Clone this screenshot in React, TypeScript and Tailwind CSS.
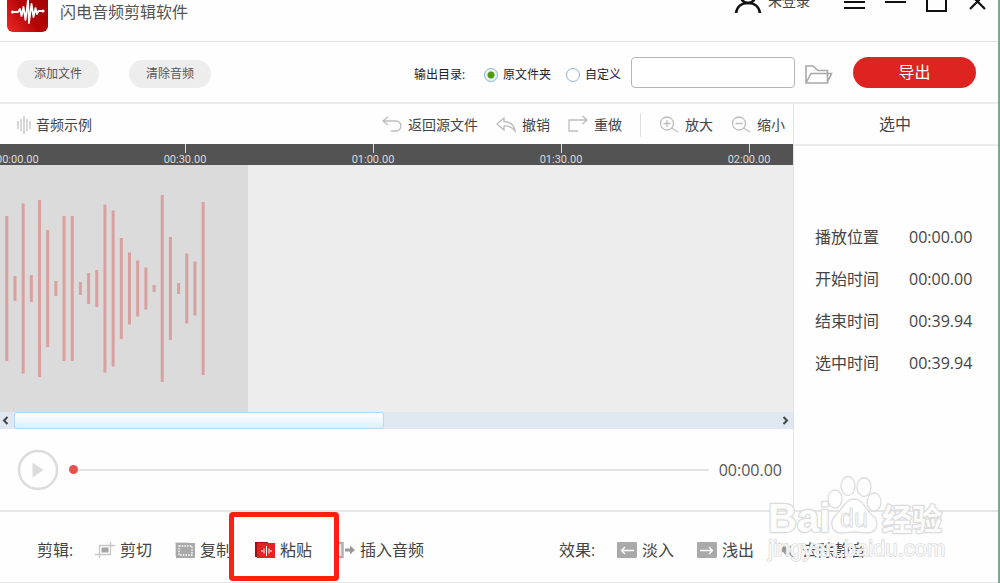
import { useState, type ReactNode } from "react";

const barHeights = [
  145, 25, 170, 27, 177, 117, 15, 145, 145, 13, 31, 37, 168, 156, 101, 72, 56, 42, 7, 187, 103, 11, 70, 54, 173,
];

const rulerMarks = ["00:30.00", "01:00.00", "01:30.00", "02:00.00"];

const selection = [
  { label: "播放位置", value: "00:00.00" },
  { label: "开始时间", value: "00:00.00" },
  { label: "结束时间", value: "00:39.94" },
  { label: "选中时间", value: "00:39.94" },
];

function LogoIcon() {
  return (
    <svg className="h-[41px] w-[41px] shrink-0" viewBox="0 0 41 41" aria-hidden="true">
      <defs>
        <linearGradient id="logo" x1="0" y1="1" x2="1" y2="0.3">
          <stop offset="0" stopColor="#ee2a28" />
          <stop offset="0.55" stopColor="#b40406" />
          <stop offset="1" stopColor="#a30204" />
        </linearGradient>
      </defs>
      <rect width="41" height="41" rx="6" fill="url(#logo)" />
      <path
        d="M5 21h6l2-3 1.500 7 2-9 2 13L21 9l1 23 2.500-19 2 13 2-9 1.500 6 1.500-3h5"
        fill="none"
        stroke="#fff"
        strokeWidth="1.800"
        strokeLinejoin="round"
      />
      <circle cx="5.500" cy="21" r="1.600" fill="#fff" />
      <circle cx="36" cy="20" r="1.600" fill="#fff" />
    </svg>
  );
}

function Icon({ children }: { children: ReactNode }) {
  return (
    <svg
      className="h-5 w-5 shrink-0"
      viewBox="0 0 20 20"
      fill="none"
      stroke="#bdbdbd"
      strokeWidth="1.300"
      aria-hidden="true"
    >
      {children}
    </svg>
  );
}

function ToolButton({ icon, label }: { icon: ReactNode; label: string }) {
  return (
    <button type="button" className="flex items-center gap-[6px] whitespace-nowrap text-sm text-[#444]">
      {icon}
      {label}
    </button>
  );
}

function EditButton({ icon, label, marked }: { icon: ReactNode; label: string; marked?: boolean }) {
  return (
    <button type="button" className="relative flex items-center gap-[5px] whitespace-nowrap text-base text-[#444]">
      {icon}
      {label}
      {marked && (
        <span className="pointer-events-none absolute -top-[26px] -left-[26px] z-10 h-[69px] w-[110px] rounded border-[5px] border-[#ff1f12]" />
      )}
    </button>
  );
}

function Header() {
  return (
    <header className="flex h-[42px] shrink-0 items-end justify-between overflow-hidden border-b border-[#e2e2e2] pr-[10px] pl-[7px]">
      <div className="mb-[9px] flex items-center gap-3">
        <LogoIcon />
        <h1 className="text-base text-[#555]">闪电音频剪辑软件</h1>
      </div>
      <div className="mb-7 flex h-6 items-center">
        <button type="button" className="flex items-center gap-[6px] text-sm text-[#444]">
          <svg className="h-6 w-7" viewBox="0 0 28 24" fill="none" stroke="#111" strokeWidth="2.500" aria-hidden="true">
            <circle cx="14" cy="6.500" r="7.500" />
            <path d="M2 25c.5-7.500 5.500-11 12-11s11.500 3.500 12 11" />
          </svg>
          未登录
        </button>
        <button type="button" aria-label="菜单" className="ml-[34px]">
          <svg className="h-6 w-[21px]" viewBox="0 0 21 24" stroke="#111" strokeWidth="2" aria-hidden="true">
            <path d="M0 7h21M0 13h21M0 19h21" />
          </svg>
        </button>
        <button type="button" aria-label="最小化" className="ml-5">
          <svg className="h-6 w-[21px]" viewBox="0 0 21 24" stroke="#111" strokeWidth="2" aria-hidden="true">
            <path d="M0 13h21" />
          </svg>
        </button>
        <button type="button" aria-label="最大化" className="ml-5">
          <svg className="h-6 w-[21px]" viewBox="0 0 21 24" fill="none" stroke="#111" strokeWidth="2" aria-hidden="true">
            <rect x="1" y="3" width="19" height="19" />
          </svg>
        </button>
        <button type="button" aria-label="关闭" className="ml-5">
          <svg className="h-6 w-[21px]" viewBox="0 0 21 24" stroke="#111" strokeWidth="2.200" aria-hidden="true">
            <path d="M3 5l15 15M18 5L3 20" />
          </svg>
        </button>
      </div>
    </header>
  );
}

const radioClass =
  "h-[14px] w-[14px] appearance-none rounded-full border border-[#8db4cf] bg-white checked:bg-[radial-gradient(circle,#4f9a06_3px,#e8f2f8_4px)]";

function FileBar() {
  const [target, setTarget] = useState("source");

  return (
    <div className="flex h-[62px] shrink-0 items-center border-b-2 border-[#ececec] pt-1 pr-[22px] pl-[17px]">
      <div className="flex gap-[30px]">
        <button type="button" className="h-7 w-[82px] rounded-full bg-[#ededed] text-xs text-[#555]">
          添加文件
        </button>
        <button type="button" className="h-7 w-[82px] rounded-full bg-[#ededed] text-xs text-[#555]">
          清除音频
        </button>
      </div>
      <div
        role="radiogroup"
        aria-labelledby="target-label"
        className="ml-auto flex items-center gap-[15px] pt-[2px] text-xs text-[#222]"
      >
        <span id="target-label" className="w-[55px]">
          输出目录:
        </span>
        <label className="flex items-center gap-[5px]">
          <input
            type="radio"
            name="target"
            className={radioClass}
            checked={target === "source"}
            onChange={() => setTarget("source")}
          />
          原文件夹
        </label>
        <label className="flex items-center gap-[5px]">
          <input
            type="radio"
            name="target"
            className={radioClass}
            checked={target === "custom"}
            onChange={() => setTarget("custom")}
          />
          自定义
        </label>
      </div>
      <input
        type="text"
        aria-label="输出路径"
        className="mb-1 ml-[10px] h-[31px] w-[164px] rounded border border-[#b5b5b5] bg-white px-2 text-xs"
      />
      <button type="button" aria-label="浏览" className="ml-[10px]">
        <svg className="h-5 w-7" viewBox="0 0 28 20" fill="none" stroke="#a9a9a9" strokeWidth="1.600" aria-hidden="true">
          <path d="M1 19V2h7l5 4.500h9.500V19zM1 19l5-9.500h20.500L22 19" />
        </svg>
      </button>
      <button type="button" className="mb-1 ml-5 h-[31px] w-[123px] rounded-full bg-[#de2421] text-base text-white">
        导出
      </button>
    </div>
  );
}

function TrackBar() {
  return (
    <div className="flex h-10 shrink-0 items-center pt-[2px] pr-2 pl-[17px]">
      <div className="flex items-center gap-[5px] text-sm text-[#444]">
        <svg className="h-5 w-[14px]" viewBox="0 0 14 20" stroke="#bdbdbd" strokeWidth="1.200" aria-hidden="true">
          <path d="M1 6v8M4 4v12M7 1v18M10 4v12M13 6v8" />
        </svg>
        音频示例
      </div>
      <div className="ml-auto flex items-center gap-[18px]">
        <ToolButton
          label="返回源文件"
          icon={
            <Icon>
              <path d="M6 2L1 6l5 4M1 6h13a4.500 4.500 0 0 1 0 10H9" />
            </Icon>
          }
        />
        <ToolButton
          label="撤销"
          icon={
            <Icon>
              <path d="M8 3L1 9l7 6v-4c5-.5 8 1 11 5-.5-5.500-4-9-11-9.500z" />
            </Icon>
          }
        />
        <ToolButton
          label="重做"
          icon={
            <Icon>
              <path d="M10 16H1V5h17M14.500 1L19 5l-4.500 4" />
            </Icon>
          }
        />
        <div className="h-6 w-px bg-[#ddd]" />
        <ToolButton
          label="放大"
          icon={
            <Icon>
              <circle cx="8" cy="8.500" r="6.500" />
              <path d="M12.500 13l6.500 4M8 5v7M4.500 8.500h7" />
            </Icon>
          }
        />
        <ToolButton
          label="缩小"
          icon={
            <Icon>
              <circle cx="8" cy="8.500" r="6.500" />
              <path d="M12.500 13l6.500 4M4.500 8.500h7" />
            </Icon>
          }
        />
      </div>
    </div>
  );
}

function Timeline() {
  return (
    <>
      <div className="flex h-[21px] shrink-0 overflow-hidden bg-[#535353] font-['Roboto',sans-serif] text-[11px] leading-[10px] text-[#dcdcdc]">
        <div className="-ml-[4px] flex w-[95px] shrink-0 items-end">00:00.00</div>
        {rulerMarks.map((mark) => (
          <div key={mark} className="flex w-[188px] shrink-0 flex-col items-center justify-between">
            <span className="h-[9px] w-px bg-[#dcdcdc]" />
            {mark}
          </div>
        ))}
      </div>
      <div className="min-h-[247px] flex-1 bg-[#ededed]">
        <div className="flex h-full w-[248px] items-center bg-[#dbdbdb]">
          <svg className="h-[247px] w-[248px]" viewBox="0 0 248 247" role="img" aria-label="波形">
            {barHeights.map((h, i) => (
              <rect key={i} x={5.3 + i * 8.18} y={123.5 - h / 2} width="3" height={h} fill="#d9a0a0" />
            ))}
          </svg>
        </div>
      </div>
      <div className="flex h-[17px] shrink-0 items-center bg-[#dfe8f1]">
        <button type="button" aria-label="向左滚动" className="flex w-[14px] pl-[2px]">
          <svg className="h-[9px] w-[7px]" viewBox="0 0 7 9" fill="none" stroke="#444" strokeWidth="2" aria-hidden="true">
            <path d="M5.500 1L2 4.500 5.500 8" />
          </svg>
        </button>
        <div className="h-full flex-1">
          <div className="h-full w-[370px] rounded-[3px] border border-[#b5d8f5] bg-linear-to-b from-white to-[#dceffb]" />
        </div>
        <button type="button" aria-label="向右滚动" className="flex w-4 justify-center">
          <svg className="h-[9px] w-[7px]" viewBox="0 0 7 9" fill="none" stroke="#444" strokeWidth="2" aria-hidden="true">
            <path d="M1.500 1L5 4.500 1.500 8" />
          </svg>
        </button>
      </div>
    </>
  );
}

function Player() {
  return (
    <div className="flex h-[81px] shrink-0 items-center pr-[11px] pl-[17px]">
      <button type="button" aria-label="播放">
        <svg className="h-[42px] w-[42px]" viewBox="0 0 42 42" aria-hidden="true">
          <circle cx="21" cy="21" r="19" fill="none" stroke="#dcdcdc" strokeWidth="2.500" />
          <path d="M16 14.500l10 6.500-10 6.500z" fill="#dcdcdc" stroke="#dcdcdc" strokeLinejoin="round" />
        </svg>
      </button>
      <input
        type="range"
        min={0}
        max={100}
        defaultValue={0}
        aria-label="播放进度"
        className="mr-[10px] ml-[10px] h-[9px] min-w-0 flex-1 appearance-none bg-[linear-gradient(#e3e3e3,#e3e3e3)] bg-[length:100%_2px] bg-center bg-no-repeat [&::-webkit-slider-thumb]:h-[9px] [&::-webkit-slider-thumb]:w-[9px] [&::-webkit-slider-thumb]:appearance-none [&::-webkit-slider-thumb]:rounded-full [&::-webkit-slider-thumb]:bg-[#e8504e]"
      />
      <span className="text-base text-[#555]">00:00.00</span>
    </div>
  );
}

function SelectionPanel() {
  return (
    <aside className="w-[205px] shrink-0 border-l border-[#e2e2e2]">
      <h2 className="flex h-[42px] items-center justify-center border-b-2 border-[#ececec] pr-[2px] text-base text-[#444]">
        选中
      </h2>
      <dl className="flex flex-col gap-[18px] pt-[79px] pl-[21px] text-base text-[#444]">
        {selection.map((row) => (
          <div key={row.label} className="flex">
            <dt className="w-[94px]">{row.label}</dt>
            <dd>{row.value}</dd>
          </div>
        ))}
      </dl>
    </aside>
  );
}

function EditBar() {
  return (
    <footer className="flex h-[73px] shrink-0 items-center border-t-2 border-b border-[#e6e6e6] pt-[6px] pl-[37px] text-base text-[#444]">
      <span className="w-[58px]">剪辑:</span>
      <div className="flex gap-[23px]">
        <EditButton
          label="剪切"
          icon={
            <Icon>
              <path d="M0 14.500h15.500V2M4.500 18V5.500H20" stroke="#c8c8c8" />
              <rect x="6.500" y="7.500" width="7" height="5" fill="#a5a5a5" stroke="none" />
            </Icon>
          }
        />
        <EditButton
          label="复制"
          icon={
            <Icon>
              <path d="M0 2h14v3H3v11H0z" fill="#dedede" stroke="none" />
              <rect x="1" y="3" width="19" height="15" fill="#a9a9a9" stroke="none" />
              <rect x="4" y="6" width="13" height="9" stroke="#fff" strokeDasharray="1.500 1.200" />
            </Icon>
          }
        />
        <EditButton
          marked
          label="粘贴"
          icon={
            <Icon>
              <path d="M0 2h13v4H4v11H0z" fill="#a80d0d" stroke="none" />
              <rect x="2" y="3" width="18" height="15" fill="#df2524" stroke="none" />
              <path d="M7 10v2M9 8.500v5M11.500 6v10M14 8.500v5M16 10v2" stroke="#fff" strokeWidth="1" />
            </Icon>
          }
        />
        <EditButton
          label="插入音频"
          icon={
            <Icon>
              <path d="M0 3h7.500v14H0" stroke="#b0b0b0" strokeWidth="2.500" />
              <path d="M10 8.500h5V5.500l5 4.500-5 4.500v-3h-5z" fill="#999" stroke="none" />
            </Icon>
          }
        />
      </div>
      <div className="ml-auto flex w-[439px] shrink-0 items-center">
        <span className="w-[58px]">效果:</span>
        <div className="flex gap-[23px]">
          <EditButton
            label="淡入"
            icon={
              <Icon>
                <rect x="0" y="2" width="20" height="16" rx="1" fill="#a9a9a9" stroke="none" />
                <path d="M17 10.500H5M8 7l-3.500 3.500L8 14" stroke="#fff" />
              </Icon>
            }
          />
          <EditButton
            label="浅出"
            icon={
              <Icon>
                <rect x="0" y="2" width="20" height="16" rx="1" fill="#a9a9a9" stroke="none" />
                <path d="M3 10.500h12M12 7l3.500 3.500L12 14" stroke="#fff" />
              </Icon>
            }
          />
          <EditButton
            label="去除静音"
            icon={
              <Icon>
                <path d="M3 8h3l5-5v14l-5-5H3z" fill="#999" stroke="none" />
                <path d="M13 6c2 2 2 6 0 8M2 3l14 14" stroke="#888" />
              </Icon>
            }
          />
        </div>
      </div>
    </footer>
  );
}

function Watermark() {
  return (
    <svg
      className="pointer-events-none absolute right-[51px] bottom-[15px] h-[94px] w-[184px] font-['Liberation_Sans','Noto_Sans_CJK_SC',sans-serif] font-bold"
      viewBox="0 0 184 94"
      fill="#fff"
      stroke="#dcdcdc"
      strokeWidth="1.300"
      strokeLinejoin="round"
      aria-hidden="true"
    >
      <g fillOpacity="0.9">
        <ellipse cx="72" cy="25" rx="7" ry="9" />
        <ellipse cx="85" cy="12" rx="7" ry="9.500" />
        <ellipse cx="101" cy="13" rx="7" ry="9.500" />
        <ellipse cx="111" cy="28" rx="7" ry="9" />
        <path d="M91 25c9 0 11 10 18 16 8 6 6 18-5 18-6 0-8-1-13-1s-7 1-13 1c-10 0-12-12-5-18s9-16 18-16z" />
        <text x="5" y="58" fontSize="40" paintOrder="stroke" strokeWidth="2.500">
          Bai
        </text>
        <text x="77" y="53" fontSize="25" fontWeight="400" strokeWidth="1">
          du
        </text>
        <text x="119" y="56" fontSize="30" paintOrder="stroke" strokeWidth="2.500">
          经验
        </text>
      </g>
      <text x="5" y="82" fontSize="22" fontWeight="400" fillOpacity="0.8" paintOrder="stroke" strokeWidth="1.500">
        jingyan.baidu.com
      </text>
    </svg>
  );
}

export default function App() {
  return (
    <div className="relative flex min-h-screen flex-col overflow-hidden border-r-2 border-[#7da793] bg-[#fefefe] font-['Open_Sans','Noto_Sans_CJK_SC',sans-serif]">
      <Header />
      <FileBar />
      <div className="flex flex-1">
        <main className="flex min-w-0 flex-1 flex-col">
          <TrackBar />
          <Timeline />
          <Player />
        </main>
        <SelectionPanel />
      </div>
      <EditBar />
      <Watermark />
    </div>
  );
}
